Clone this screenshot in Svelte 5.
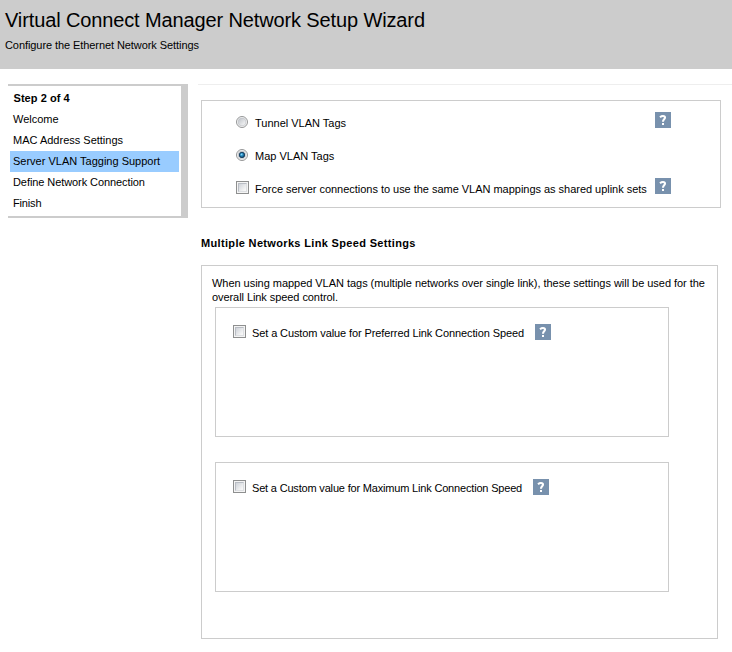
<script>
  const steps = [
    { label: 'Welcome', ls: 0 },
    { label: 'MAC Address Settings', ls: 0 },
    { label: 'Server VLAN Tagging Support', ls: 0, active: true },
    { label: 'Define Network Connection', ls: -0.08 },
    { label: 'Finish', ls: -0.15 }
  ];
  const speeds = [
    { label: 'Set a Custom value for Preferred Link Connection Speed', width: 283, ls: -0.105 },
    { label: 'Set a Custom value for Maximum Link Connection Speed', width: 281, ls: -0.18 }
  ];
</script>

{#snippet help()}
  <svg class="help" width="16" height="16" viewBox="0 0 16 16" aria-label="Help">
    <rect width="16" height="16" fill="#7891ad" />
    <path d="M5 5.2C6.2 4.2 7 4 8 4C9.5 4 10 4.8 10 5.6C10 7.4 8 7.2 8 9.8" fill="none" stroke="#fff" stroke-width="2.1" />
    <rect x="7" y="11" width="2" height="2" fill="#fff" />
  </svg>
{/snippet}

{#snippet checkbox()}
  <span class="check"><i></i></span>
{/snippet}

{#snippet radio(on)}
  <svg class="radio" width="12" height="12" viewBox="0 0 12 12">
    <defs>
      <linearGradient id="well" x1="0" y1="0" x2="1" y2="1">
        <stop offset="0.1" stop-color="#c2c6cc" />
        <stop offset="0.9" stop-color="#f6f6f6" />
      </linearGradient>
      <radialGradient id="dot" cx="0.42" cy="0.4" r="0.6">
        <stop offset="0" stop-color="#8fdcf8" />
        <stop offset="0.4" stop-color="#2a8fc6" />
        <stop offset="1" stop-color="#10405f" />
      </radialGradient>
    </defs>
    <circle cx="6" cy="6" r="5.5" fill="#f6f6f6" stroke="#959697" />
    <circle cx="6" cy="6" r="3.9" fill="url(#well)" stroke="#c0c3c8" stroke-width="0.7" />
    {#if on}
      <circle cx="6" cy="6" r="2.7" fill="url(#dot)" stroke="#153c5c" stroke-width="0.9" />
    {/if}
  </svg>
{/snippet}

<div class="page">
  <header>
    <h1>Virtual Connect Manager Network Setup Wizard</h1>
    <p>Configure the Ethernet Network Settings</p>
  </header>
  <div class="body">
    <nav>
      <div class="step title">Step 2 of 4</div>
      {#each steps as s}
        <div class="step" class:active={s.active} style:letter-spacing="{s.ls}px">{s.label}</div>
      {/each}
    </nav>
    <main>
      <section class="vlan">
        <div class="row">
          {@render radio(false)}
          <span class="label">Tunnel VLAN Tags</span>
          {@render help()}
        </div>
        <div class="row">
          {@render radio(true)}
          <span class="label">Map VLAN Tags</span>
        </div>
        <div class="row">
          {@render checkbox()}
          <span class="label force">Force server connections to use the same VLAN mappings as shared uplink sets</span>
          {@render help()}
        </div>
      </section>
      <h2>Multiple Networks Link Speed Settings</h2>
      <section class="speed">
        <p><span class="l1">When using mapped VLAN tags (multiple networks over single link), these settings will be used for the</span><br /><span class="l2">overall Link speed control.</span></p>
        {#each speeds as s}
          <div class="box">
            {@render checkbox()}
            <span class="label" style:width="{s.width}px" style:letter-spacing="{s.ls}px">{s.label}</span>
            {@render help()}
          </div>
        {/each}
      </section>
    </main>
  </div>
</div>

<style>
  :global(body) { margin: 0; background: #fff; }
  .page {
    width: 732px;
    height: 652px;
    overflow: hidden;
    background: #fff;
    color: #000;
    font: 11px/14px "Liberation Sans", Arial, sans-serif;
    white-space: nowrap;
  }
  header { height: 69px; box-sizing: border-box; background: #ccc; padding: 8px 0 0 5px; }
  h1 { margin: 0; font-size: 20px; line-height: 24px; font-weight: 400; letter-spacing: -0.125px; }
  p { margin: 0; }
  header p { margin-top: 6px; letter-spacing: -0.077px; }
  .body { display: flex; align-items: flex-start; padding: 15px 0 0 8px; }
  nav {
    box-sizing: border-box;
    width: 180px;
    height: 134px;
    padding: 2px;
    border: solid #ccc;
    border-width: 2px 7px 2px 0;
  }
  .step { height: 21px; line-height: 21px; padding-left: 3px; }
  .title { font-weight: 700; padding-left: 3.5px; letter-spacing: 0.05px; }
  .active { background: #9cf; }
  main { flex: 1; margin-left: 10px; padding-left: 3px; border-top: 1px solid #eee; }
  section { border: 1px solid #ccc; box-sizing: border-box; }
  .vlan { width: 520px; height: 108px; margin-top: 15px; padding: 11px 0 0 34px; }
  .row { display: flex; align-items: flex-start; height: 33px; }
  .label { margin-left: 6px; padding-top: 4px; width: 400px; flex: none; }
  .force { letter-spacing: -0.026px; }
  .radio { display: block; flex: none; margin: 4px 1px 0 0; }
  .row .check { margin-top: 3px; }
  .check {
    flex: none;
    box-sizing: border-box;
    width: 13px;
    height: 13px;
    border: 1px solid #8e8f8f;
    padding: 1px;
    background: #f4f4f4;
  }
  .check i {
    display: block;
    box-sizing: border-box;
    width: 9px;
    height: 9px;
    border: 1px solid #b9bdc4;
    border-right-color: #dddfe2;
    border-bottom-color: #dddfe2;
    background: linear-gradient(135deg, #cfd3d9, #f6f6f6 85%);
  }
  .help { display: block; flex: none; }
  h2 { margin: 28px 0 0; font-size: 11px; line-height: 14px; font-weight: 700; letter-spacing: 0.335px; }
  .speed { width: 517px; height: 374px; margin-top: 15px; padding: 10px 0 0 10px; }
  .speed p { height: 28px; }
  .l1 { letter-spacing: -0.035px; }
  .l2 { letter-spacing: -0.07px; }
  .box {
    display: flex;
    align-items: flex-start;
    box-sizing: border-box;
    width: 454px;
    height: 130px;
    margin: 3px 0 25px 3px;
    border: 1px solid #ccc;
    padding: 16px 0 0 17px;
  }
  .box .check { margin-top: 1px; }
  .box .label { padding-top: 2px; }
</style>
